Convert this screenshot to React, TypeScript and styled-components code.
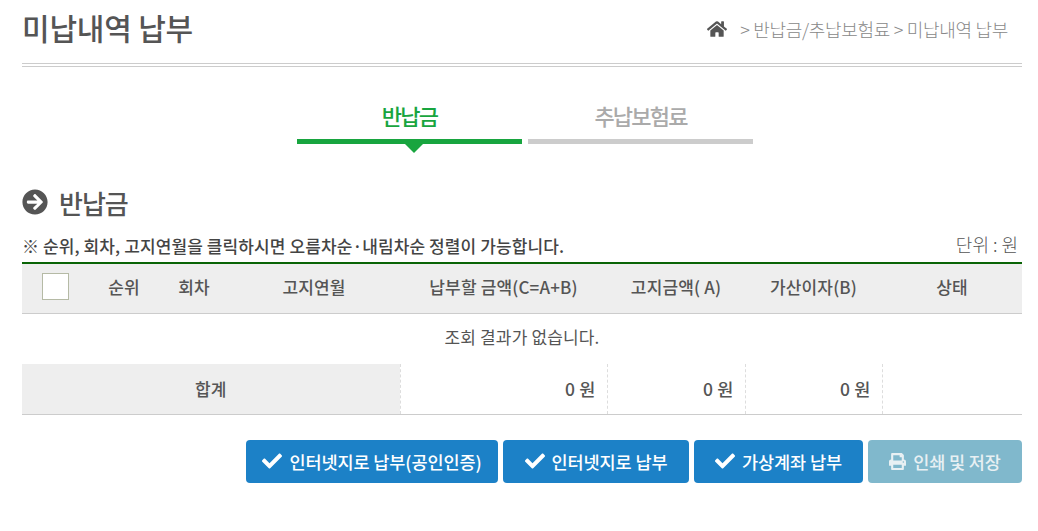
import styled, { createGlobalStyle } from "styled-components";
import { FaArrowCircleRight, FaCheck, FaHome, FaPrint } from "react-icons/fa";

const GlobalStyle = createGlobalStyle`
  html, body {
    margin: 0;
    padding: 0;
    background: #fff;
    font-family: "Noto Sans CJK KR", "Noto Sans", sans-serif;
    color: #555;
  }
`;

const Page = styled.div`
  width: 1000px;
  padding: 0 16px 0 22px;
`;

const PageHeader = styled.header`
  height: 63px;
  display: flex;
  align-items: center;
  justify-content: space-between;
  border-bottom: 1px solid #ccc;
  position: relative;
  &::after {
    content: "";
    position: absolute;
    left: 0;
    right: 0;
    bottom: -4px;
    height: 1px;
    background: #ccc;
  }
`;

const Title = styled.h1`
  margin: -10px 0 0;
  font-size: 30px;
  line-height: 44px;
  font-weight: 500;
  letter-spacing: -0.2px;
  color: #555;
`;

const Breadcrumb = styled.div`
  display: flex;
  align-items: center;
  margin: -6px 14px 0 0;
  font-size: 18px;
  letter-spacing: -0.3px;
  font-weight: 300;
  color: #888;
  svg {
    width: 20px;
    height: 20px;
    color: #555;
    margin-right: 13px;
  }
`;

const Tabs = styled.nav`
  display: flex;
  justify-content: center;
  gap: 6px;
  margin-top: 33px;
  padding-left: 6px;
`;

const Tab = styled.div<{ $active?: boolean }>`
  width: 225px;
  height: 37px;
  padding-bottom: 5px;
  text-align: center;
  font-size: 22px;
  line-height: 36px;
  font-weight: 500;
  letter-spacing: -1.8px;
  color: ${(p) => (p.$active ? "#18a53f" : "#aaa")};
  border-bottom: 5px solid ${(p) => (p.$active ? "#18a53f" : "#ccc")};
  position: relative;
  ${(p) =>
    p.$active &&
    `&::after {
      content: "";
      position: absolute;
      left: 50%;
      bottom: -14px;
      margin-left: -5px;
      border-top: 9px solid #18a53f;
      border-left: 9px solid transparent;
      border-right: 9px solid transparent;
    }`}
`;

const SectionTitle = styled.h2`
  display: flex;
  align-items: center;
  gap: 11px;
  margin: 38px 0 0;
  height: 40px;
  font-size: 26px;
  font-weight: 500;
  letter-spacing: -1px;
  color: #555;
  svg {
    width: 26px;
    height: 26px;
  }
`;

const TableCaption = styled.div`
  display: flex;
  align-items: center;
  justify-content: space-between;
  height: 35px;
  margin-top: 5px;
`;

const Note = styled.strong`
  font-size: 17px;
  font-weight: 500;
  letter-spacing: 0.1px;
  margin-top: 2px;
  color: #444;
`;

const Unit = styled.span`
  font-size: 18px;
  margin: -1px 4px 0 0;
  font-weight: 300;
  color: #555;
`;

const Table = styled.table`
  width: 1000px;
  table-layout: fixed;
  border-collapse: collapse;
  border-top: 2px solid #0a6406;
  font-size: 17px;
  letter-spacing: 0.15px;
`;

const Th = styled.th`
  box-sizing: border-box;
  height: 50px;
  padding: 0 0 3px;
  background: #eee;
  border-bottom: 1px solid #ccc;
  font-weight: 500;
  color: #555;
  text-align: center;
`;

const Checkbox = styled.span`
  display: block;
  width: 25px;
  height: 25px;
  margin: 0 auto;
  background: #fff;
  border: 1px solid #b5baa5;
`;

const EmptyCell = styled.td`
  box-sizing: border-box;
  height: 51px;
  padding: 0 0 5px;
  text-align: center;
  font-weight: 400;
  color: #555;
`;

const SumLabel = styled.td`
  box-sizing: border-box;
  height: 50px;
  padding: 0 0 1px;
  background: #eee;
  text-align: center;
  font-weight: 500;
  color: #555;
  border-bottom: 1px solid #ccc;
`;

const SumCell = styled.td`
  padding: 0 11px 1px 0;
  text-align: right;
  font-weight: 500;
  font-size: 17.5px;
  color: #555;
  border-bottom: 1px solid #ccc;
  border-left: 1px dashed #ddd;
`;

const Actions = styled.div`
  display: flex;
  justify-content: flex-end;
  gap: 5px;
  margin-top: 25px;
`;

const Button = styled.button<{ $muted?: boolean; $width: number }>`
  display: flex;
  align-items: center;
  justify-content: center;
  gap: 7px;
  width: ${(p) => p.$width}px;
  height: 43px;
  padding: 0;
  border: 0;
  border-radius: 4px;
  background: ${(p) => (p.$muted ? "#80b8cc" : "#1c81c7")};
  color: ${(p) => (p.$muted ? "#e8f0f3" : "#fff")};
  font-family: inherit;
  font-size: 17.5px;
  font-weight: 500;
  letter-spacing: -0.1px;
  svg {
    width: ${(p) => (p.$muted ? 17 : 20)}px;
    height: ${(p) => (p.$muted ? 17 : 20)}px;
  }
`;

const columns = [66, 72, 68, 172, 207, 138, 137, 140];
const headers = ["순위", "회차", "고지연월", "납부할 금액(C=A+B)", "고지금액( A)", "가산이자(B)", "상태"];

export default function App() {
  return (
    <Page>
      <GlobalStyle />
      <PageHeader>
        <Title>미납내역 납부</Title>
        <Breadcrumb>
          <FaHome />
          &gt; 반납금/추납보험료 &gt; 미납내역 납부
        </Breadcrumb>
      </PageHeader>

      <Tabs>
        <Tab $active>반납금</Tab>
        <Tab>추납보험료</Tab>
      </Tabs>

      <SectionTitle>
        <FaArrowCircleRight />
        반납금
      </SectionTitle>

      <TableCaption>
        <Note>※ 순위, 회차, 고지연월을 클릭하시면 오름차순·내림차순 정렬이 가능합니다.</Note>
        <Unit>단위 : 원</Unit>
      </TableCaption>

      <Table>
        <colgroup>
          {columns.map((w, i) => (
            <col key={i} width={w} />
          ))}
        </colgroup>
        <thead>
          <tr>
            <Th>
              <Checkbox />
            </Th>
            {headers.map((h) => (
              <Th key={h}>{h}</Th>
            ))}
          </tr>
        </thead>
        <tbody>
          <tr>
            <EmptyCell colSpan={8}>조회 결과가 없습니다.</EmptyCell>
          </tr>
          <tr>
            <SumLabel colSpan={4}>합계</SumLabel>
            <SumCell>0 원</SumCell>
            <SumCell>0 원</SumCell>
            <SumCell>0 원</SumCell>
            <SumCell />
          </tr>
        </tbody>
      </Table>

      <Actions>
        <Button $width={252}>
          <FaCheck />
          인터넷지로 납부(공인인증)
        </Button>
        <Button $width={186}>
          <FaCheck />
          인터넷지로 납부
        </Button>
        <Button $width={169}>
          <FaCheck />
          가상계좌 납부
        </Button>
        <Button $muted $width={154}>
          <FaPrint />
          인쇄 및 저장
        </Button>
      </Actions>
    </Page>
  );
}
